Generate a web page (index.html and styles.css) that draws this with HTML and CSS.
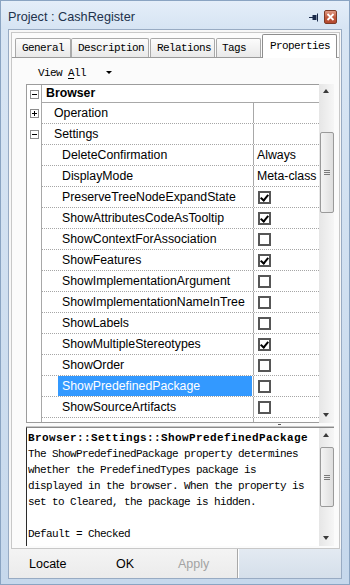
FILE: index.html
```html
<!DOCTYPE html>
<html>
<head>
<meta charset="utf-8">
<link rel="stylesheet" href="styles.css">
</head>
<body>
<div class="window">
  <div class="titlebar">
    <span class="title">Project : CashRegister</span>
    <span class="pin"><svg width="10" height="9" viewBox="0 0 10 9"><path d="M0 4.5H4" stroke="#1a2a4a" stroke-width="1"/><rect x="3.5" y="2" width="4" height="5" fill="#1a2a4a"/><path d="M8.5 0.5V8.5" stroke="#1a2a4a" stroke-width="1"/></svg></span>
    <span class="close"><svg width="9" height="8" viewBox="0 0 9 8"><path d="M1.5 1L7.5 7M7.5 1L1.5 7" stroke="#fff" stroke-width="1.8"/></svg></span>
  </div>
  <div class="panel">
    <div class="tabctl">
      <div class="tabs">
        <div class="tab t-general">General</div>
        <div class="tab t-desc">Description</div>
        <div class="tab t-rel">Relations</div>
        <div class="tab t-tags">Tags</div>
        <div class="tab t-props active">Properties</div>
      </div>
      <div class="page">
        <div class="toolbar"><span class="viewall">View <u>A</u>ll</span><span class="caret"></span></div>
        <div class="gridwrap">
          <div class="grid">
            <div class="row header">
              <div class="gutter"><span class="exp minus"></span></div>
              <div class="hcell">Browser</div>
            </div>
            <div class="row">
              <div class="gutter"><span class="exp plus"></span></div>
              <div class="cells"><div class="name l1">Operation</div><div class="value"></div></div>
            </div>
            <div class="row">
              <div class="gutter"><span class="exp minus"></span></div>
              <div class="cells"><div class="name l1">Settings</div><div class="value"></div></div>
            </div>
            <div class="row">
              <div class="gutter"></div>
              <div class="cells"><div class="name l2"><span class="lbl">DeleteConfirmation</span></div><div class="value"><span class="vtext">Always</span></div></div>
            </div>
            <div class="row">
              <div class="gutter"></div>
              <div class="cells"><div class="name l2"><span class="lbl">DisplayMode</span></div><div class="value"><span class="vtext">Meta-class</span></div></div>
            </div>
            <div class="row">
              <div class="gutter"></div>
              <div class="cells"><div class="name l2"><span class="lbl">PreserveTreeNodeExpandState</span></div><div class="value"><span class="cb on"></span></div></div>
            </div>
            <div class="row">
              <div class="gutter"></div>
              <div class="cells"><div class="name l2"><span class="lbl">ShowAttributesCodeAsTooltip</span></div><div class="value"><span class="cb on"></span></div></div>
            </div>
            <div class="row">
              <div class="gutter"></div>
              <div class="cells"><div class="name l2"><span class="lbl">ShowContextForAssociation</span></div><div class="value"><span class="cb"></span></div></div>
            </div>
            <div class="row">
              <div class="gutter"></div>
              <div class="cells"><div class="name l2"><span class="lbl">ShowFeatures</span></div><div class="value"><span class="cb on"></span></div></div>
            </div>
            <div class="row">
              <div class="gutter"></div>
              <div class="cells"><div class="name l2"><span class="lbl">ShowImplementationArgument</span></div><div class="value"><span class="cb"></span></div></div>
            </div>
            <div class="row">
              <div class="gutter"></div>
              <div class="cells"><div class="name l2"><span class="lbl">ShowImplementationNameInTree</span></div><div class="value"><span class="cb"></span></div></div>
            </div>
            <div class="row">
              <div class="gutter"></div>
              <div class="cells"><div class="name l2"><span class="lbl">ShowLabels</span></div><div class="value"><span class="cb"></span></div></div>
            </div>
            <div class="row">
              <div class="gutter"></div>
              <div class="cells"><div class="name l2"><span class="lbl">ShowMultipleStereotypes</span></div><div class="value"><span class="cb on"></span></div></div>
            </div>
            <div class="row">
              <div class="gutter"></div>
              <div class="cells"><div class="name l2"><span class="lbl">ShowOrder</span></div><div class="value"><span class="cb"></span></div></div>
            </div>
            <div class="row">
              <div class="gutter"></div>
              <div class="cells"><div class="name l2"><span class="lbl selected">ShowPredefinedPackage</span></div><div class="value"><span class="cb"></span></div></div>
            </div>
            <div class="row">
              <div class="gutter"></div>
              <div class="cells"><div class="name l2"><span class="lbl">ShowSourceArtifacts</span></div><div class="value"><span class="cb"></span></div></div>
            </div>
            <div class="row">
              <div class="gutter"></div>
              <div class="cells"><div class="name l2"><span class="lbl"></span></div><div class="value"><span class="cb"></span></div></div>
            </div>
          </div>
          <div class="vscroll grid-scroll">
            <span class="arrow up"></span>
            <span class="thumb"><span class="grip"></span></span>
            <span class="arrow down"></span>
          </div>
        </div>
        <div class="splitter"><span class="sgrip"></span></div>
        <div class="desc">
          <div class="desc-text">
            <div class="dline bold">Browser::Settings::ShowPredefinedPackage</div>
            <div class="dline">The ShowPredefinedPackage property determines</div>
            <div class="dline">whether the PredefinedTypes package is</div>
            <div class="dline">displayed in the browser. When the property is</div>
            <div class="dline">set to Cleared, the package is hidden.</div>
            <div class="dline blank"></div>
            <div class="dline">Default = Checked</div>
          </div>
          <div class="vscroll desc-scroll">
            <span class="arrow up"></span>
            <span class="thumb"><span class="grip"></span></span>
            <span class="arrow down"></span>
          </div>
        </div>
      </div>
    </div>
    <div class="buttons">
      <div class="btnarea">
        <span class="btn b-locate">Locate</span>
        <span class="btn b-ok">OK</span>
        <span class="btn b-apply disabled">Apply</span>
      </div>
      <div class="btnrest"></div>
    </div>
  </div>
</div>
</body>
</html>
```
FILE: styles.css
```css
html, body { margin: 0; padding: 0; }
body { width: 350px; height: 585px; overflow: hidden; background: #c9daec; }

.window {
  width: 350px; height: 585px; box-sizing: border-box;
  border: 1px solid #8aa4c2;
  background: linear-gradient(#d9e6f4, #c6d8ec);
  display: flex; flex-direction: column;
  font-family: "Liberation Sans", Arial, sans-serif;
}

.titlebar {
  height: 28px; flex: none;
  display: flex; align-items: center;
  padding: 0 12px 0 7px;
  background: linear-gradient(#e4eef9, #d6e4f3);
}
.title { font-size: 12.7px; color: #22324c; flex: 1; margin-top: 4px; }
.pin { width: 10px; height: 9px; margin-right: 5px; margin-top: 4px; display: flex; }
.close {
  width: 13px; height: 14px; box-sizing: border-box; margin-top: 4px;
  border: 1px solid #7d3a26; border-radius: 2px;
  background: linear-gradient(#e09a84, #c0573b 55%, #b44a30);
  display: flex; align-items: center; justify-content: center;
}

.panel {
  flex: 1; margin: 0 7px 5px 7px;
  border: 1px solid #98abc3;
  background: #f7f7f7;
  display: flex; flex-direction: column;
}

.tabctl {
  flex: 1; margin: 2px 1px 0 2px;
  border: 1px solid #c8c8c8;
  display: flex; flex-direction: column;
  background: #fbfbfb;
}

.tabs {
  height: 24px; flex: none;
  display: flex; align-items: flex-end; gap: 1px;
  padding-left: 3px;
  font-family: "Liberation Mono", "DejaVu Sans Mono", monospace;
  font-size: 11px; letter-spacing: -0.6px; color: #000;
}
.tab {
  height: 19px; box-sizing: border-box;
  border: 1px solid #a9a9a9; border-bottom: none;
  border-radius: 2px 2px 0 0;
  background: linear-gradient(#fcfcfc, #e9e9e9);
  padding-left: 6px; line-height: 19px;
  white-space: nowrap;
}
.t-general { width: 56px; }
.t-desc { width: 78px; margin-left: -1px; }
.t-rel { width: 65px; }
.t-tags { width: 45px; padding-left: 5px; }
.t-props { width: 75px; padding-left: 7px; }
.tab.active {
  height: 24px; margin-bottom: -1px; position: relative;
  background: #fff; border-color: #8e8e8e;
  line-height: 22px;
}

.page {
  flex: 1; border-top: 1px solid #9a9a9a;
  padding: 0 5px 2px 14px;
  display: flex; flex-direction: column;
  background: #fbfbfb;
}

.toolbar {
  height: 26px; flex: none; box-sizing: border-box;
  display: flex; align-items: center; padding: 3px 0 0 12px;
  font-family: "Liberation Mono", "DejaVu Sans Mono", monospace;
  font-size: 11px; letter-spacing: -0.6px;
}
.viewall u { text-decoration: underline; text-underline-offset: 2px; }
.caret {
  width: 0; height: 0; margin-left: 20px;
  border-left: 3px solid transparent; border-right: 3px solid transparent;
  border-top: 3px solid #000;
}

.gridwrap { height: 339px; flex: none; display: flex; }
.grid {
  flex: 1; box-sizing: border-box;
  border: 1px solid #9c9c9c; border-right: none;
  background: #fff; overflow: hidden;
  font-size: 12.3px; color: #000;
}
.row { display: flex; height: 21px; }
.row.header { height: 18px; }
.gutter {
  width: 14px; flex: none; border-right: 1px solid #a8a8a8;
  display: flex; align-items: center;
}
.hcell {
  flex: 1; border-bottom: 1px solid #a8a8a8;
  font-weight: bold; padding-left: 4px; line-height: 17px;
}
.cells {
  flex: 1; display: flex;
  border-bottom: 1px dotted #a6a6a6;
  box-sizing: border-box;
}
.name {
  width: 211px; flex: none; border-right: 1px solid #a8a8a8;
  display: flex; align-items: stretch; white-space: nowrap; overflow: hidden;
  line-height: 20px;
}
.name.l1 { padding-left: 12px; width: 199px; }
.name.l2 { padding-left: 16px; width: 195px; }
.lbl { flex: 1; padding-left: 4px; }
.lbl.selected { background: #3399ff; color: #fff; margin-right: 1px; }
.value { flex: 1; display: flex; align-items: center; overflow: hidden; white-space: nowrap; }
.vtext { padding-left: 3px; }

.exp {
  width: 9px; height: 9px; box-sizing: border-box; margin-left: 3px;
  border: 1px solid #8c8c8c; background: #fff; position: relative;
}
.exp::before {
  content: ""; position: absolute; left: 1px; top: 3px; width: 5px; height: 1px; background: #000;
}
.exp.plus::after {
  content: ""; position: absolute; left: 3px; top: 1px; width: 1px; height: 5px; background: #000;
}

.cb {
  width: 13px; height: 13px; box-sizing: border-box; margin-left: 4px;
  border: 2px solid #565656; background: #fff; position: relative;
}
.cb.on::after {
  content: ""; position: absolute; left: 2px; top: 0px;
  width: 3px; height: 6px;
  border-right: 2px solid #000; border-bottom: 2px solid #000;
  transform: rotate(40deg);
}

.vscroll {
  width: 15px; flex: none; position: relative;
  background: linear-gradient(90deg, #e6e6e6, #f6f6f6);
}
.arrow {
  position: absolute; left: 4px; width: 0; height: 0;
  border-left: 3.5px solid transparent; border-right: 3.5px solid transparent;
}
.arrow.up { top: 5px; border-bottom: 4px solid #3a3a3a; }
.arrow.down { bottom: 6px; border-top: 4px solid #3a3a3a; }
.thumb {
  position: absolute; left: 1px; right: 0;
  box-sizing: border-box; border: 1px solid #9a9a9a; border-radius: 2px;
  background: linear-gradient(90deg, #f4f4f4, #dedede);
  display: flex; align-items: center; justify-content: center;
}
.grip {
  width: 6px; height: 5px;
  background: repeating-linear-gradient(#7a7a7a 0 1px, transparent 1px 2px);
}
.grid-scroll .thumb { top: 48px; height: 81px; }
.desc-scroll .thumb { top: 19px; height: 60px; }

.splitter { height: 4px; flex: none; position: relative; border-bottom: 1px solid #c8c8c8; box-sizing: border-box; }
.sgrip { position: absolute; left: 252px; top: 1px; width: 3px; height: 1px; background: #555; }

.desc {
  height: 119px; flex: none; display: flex;
  border-top: 1px solid #8a8a8a; border-left: 1px solid #2a2a2a;
  box-sizing: border-box; background: #fff;
}
.desc-text {
  flex: 1; overflow: hidden; padding: 2px 0 0 1px;
  font-family: "Liberation Mono", "DejaVu Sans Mono", monospace;
  font-size: 11px; letter-spacing: -0.6px; line-height: 16px; color: #000;
}
.dline { white-space: nowrap; height: 16px; }
.dline.bold { font-weight: bold; letter-spacing: 0.4px; }

.buttons { height: 29px; flex: none; display: flex; }
.btnarea {
  width: 228px; flex: none; display: flex; align-items: center;
  background: linear-gradient(#f4f4f4, #ebebeb);
  border-right: 1px solid #a8a8a8;
  font-size: 12.5px; color: #000;
}
.btn { padding-left: 20px; box-sizing: border-box; }
.b-locate { width: 87px; }
.b-ok { width: 62px; }
.btn.disabled { color: #a3a3a3; }
.btnrest {
  flex: 1; border-left: 1px solid #fff;
  background: linear-gradient(#e3eaf2, #d5dfea);
}
```
